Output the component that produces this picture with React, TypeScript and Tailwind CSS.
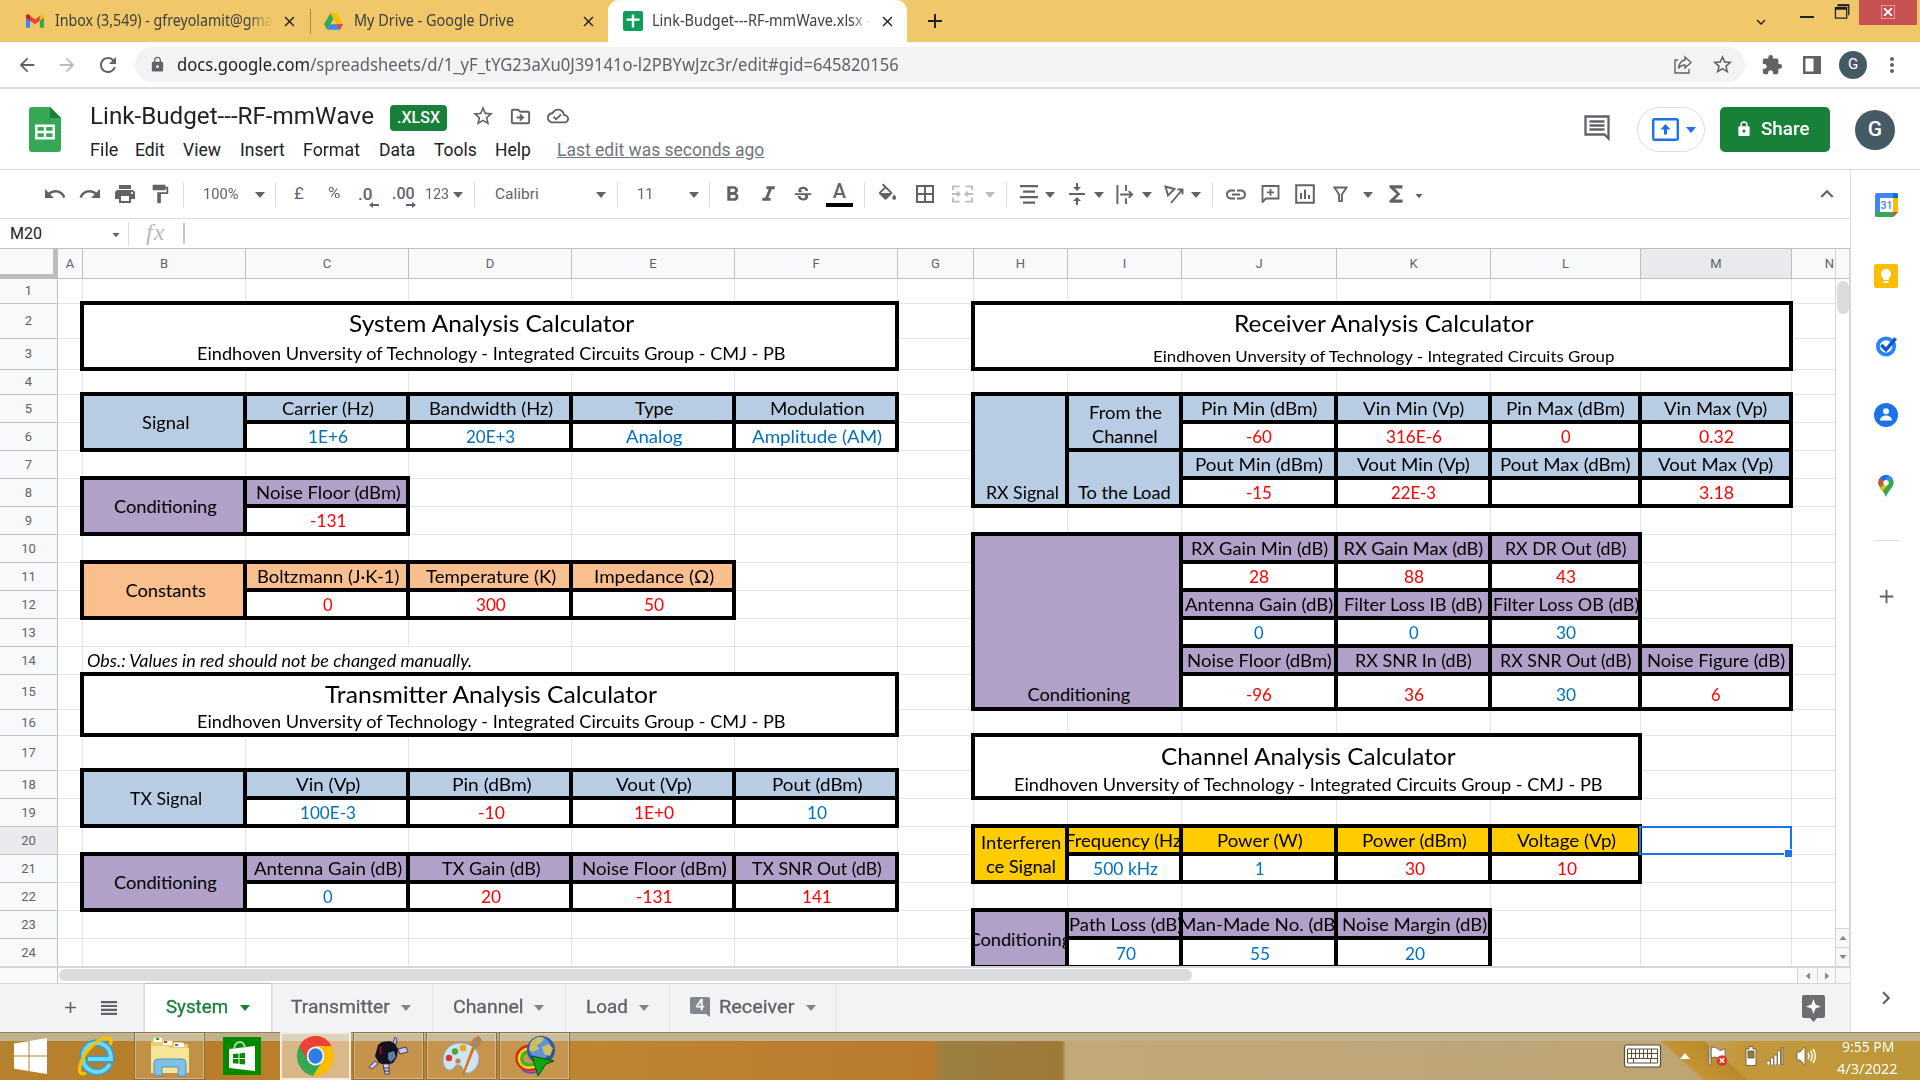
import { useLayoutEffect, useRef, useState } from "react";
import type { ReactNode } from "react";
import {
  MdUndo, MdRedo, MdPrint, MdFormatPaint, MdFormatBold, MdFormatItalic, MdStrikethroughS,
  MdBorderAll, MdVerticalAlignCenter, MdLink, MdFunctions, MdExpandLess, MdExpandMore, MdStarBorder,
  MdOutlineDriveFileMove, MdOutlineCloudDone, MdLock, MdLockOutline, MdArrowBack, MdArrowForward, MdRefresh,
  MdExtension, MdMoreVert, MdClose, MdAdd, MdChevronRight,
} from "react-icons/md";

/* Text squeezed or stretched horizontally to an exact width. */
function Fit({ w, children, className = "" }: { w: number; children: ReactNode; className?: string }) {
  const ref = useRef<HTMLSpanElement>(null);
  const [scale, setScale] = useState(1);
  useLayoutEffect(() => {
    if (ref.current) setScale(w / ref.current.offsetWidth);
  }, [w]);
  return (
    <span className={`inline-flex shrink-0 justify-start whitespace-nowrap ${className}`} style={{ width: w }}>
      <span ref={ref} className="inline-block shrink-0 origin-left whitespace-nowrap" style={{ transform: `scaleX(${scale})` }}>
        {children}
      </span>
    </span>
  );
}

function Caret({ className = "" }: { className?: string }) {
  return (
    <svg viewBox="0 0 10 6" className={`h-[6px] w-[10px] shrink-0 ${className}`} fill="currentColor">
      <path d="M0 0h10L5 6z" />
    </svg>
  );
}

const COLS = [57, 25, 163, 163, 163, 163, 163, 76, 94, 114, 155, 154, 150, 151, 44];
const ROWS = [30, 24, 35, 31, 25, 28, 28, 28, 28, 28, 28, 28, 28, 28, 28, 35, 26, 35, 28, 28, 28, 28, 28, 28, 29];
const LETTERS = "ABCDEFGHIJKLMN";

type Kind = "blue" | "purple" | "orange" | "gold" | "val" | "red";
type Cell = [ref: string, text: string, kind: Kind, width?: number];

const KIND: Record<Kind, string> = {
  blue: "bg-[#b8cce4] text-black",
  purple: "bg-[#b1a0c7] text-black",
  orange: "bg-[#fabf8f] text-black",
  gold: "bg-[#ffcc00] text-black",
  val: "bg-white text-[#0070c0]",
  red: "bg-white text-[#ff0000]",
};

const CELLS: Cell[] = [
  ["C5", "Carrier (Hz)", "blue", 92], ["D5", "Bandwidth (Hz)", "blue", 124.5], ["E5", "Type", "blue", 38], ["F5", "Modulation", "blue", 94.5],
  ["C6", "1E+6", "val", 40], ["D6", "20E+3", "val", 49.5], ["E6", "Analog", "val", 56], ["F6", "Amplitude (AM)", "val", 130],
  ["C8", "Noise Floor (dBm)", "purple", 145], ["C9", "-131", "red", 36],
  ["C11", "Boltzmann (J·K-1)", "orange", 142.5], ["D11", "Temperature (K)", "orange", 130], ["E11", "Impedance (Ω)", "orange", 120],
  ["C12", "0", "red"], ["D12", "300", "red"], ["E12", "50", "red"],
  ["C18", "Vin (Vp)", "blue", 64], ["D18", "Pin (dBm)", "blue", 79], ["E18", "Vout (Vp)", "blue", 75.5], ["F18", "Pout (dBm)", "blue", 91],
  ["C19", "100E-3", "val", 55.5], ["D19", "-10", "red", 27], ["E19", "1E+0", "red", 40], ["F19", "10", "val"],
  ["C21", "Antenna Gain (dB)", "purple", 148.5], ["D21", "TX Gain (dB)", "purple", 99], ["E21", "Noise Floor (dBm)", "purple", 145], ["F21", "TX SNR Out (dB)", "purple", 130],
  ["C22", "0", "val"], ["D22", "20", "red"], ["E22", "-131", "red", 36], ["F22", "141", "red"],
  ["J5", "Pin Min (dBm)", "blue", 116], ["K5", "Vin Min (Vp)", "blue", 101], ["L5", "Pin Max (dBm)", "blue", 119], ["M5", "Vin Max (Vp)", "blue", 103.5],
  ["J6", "-60", "red", 26], ["K6", "316E-6", "red", 55.5], ["L6", "0", "red"], ["M6", "0.32", "red", 35],
  ["J7", "Pout Min (dBm)", "blue", 127.5], ["K7", "Vout Min (Vp)", "blue", 112.5], ["L7", "Pout Max (dBm)", "blue", 130.5], ["M7", "Vout Max (Vp)", "blue", 115.5],
  ["J8", "-15", "red", 26], ["K8", "22E-3", "red", 45], ["L8", "", "red"], ["M8", "3.18", "red", 35],
  ["J10", "RX Gain Min (dB)", "purple", 137], ["K10", "RX Gain Max (dB)", "purple", 140], ["L10", "RX DR Out (dB)", "purple", 121],
  ["J11", "28", "red"], ["K11", "88", "red"], ["L11", "43", "red"],
  ["J12", "Antenna Gain (dB)", "purple", 148.5], ["K12", "Filter Loss IB (dB)", "purple", 138.5], ["L12", "Filter Loss OB (dB)", "purple", 146],
  ["J13", "0", "val"], ["K13", "0", "val"], ["L13", "30", "val"],
  ["J14", "Noise Floor (dBm)", "purple", 145], ["K14", "RX SNR In (dB)", "purple", 116.5], ["L14", "RX SNR Out (dB)", "purple", 131], ["M14", "Noise Figure (dB)", "purple", 138],
  ["J15", "-96", "red", 26], ["K15", "36", "red"], ["L15", "30", "val"], ["M15", "6", "red"],
  ["I20", "Frequency (Hz)", "gold", 121], ["J20", "Power (W)", "gold", 86], ["K20", "Power (dBm)", "gold", 105], ["L20", "Voltage (Vp)", "gold", 98.5],
  ["I21", "500 kHz", "val", 64.5], ["J21", "1", "val"], ["K21", "30", "red"], ["L21", "10", "red"],
  ["I23", "Path Loss (dB)", "purple", 113], ["J23", "Man-Made No. (dB)", "purple", 162], ["K23", "Noise Margin (dB)", "purple", 145],
  ["I24", "70", "val"], ["J24", "55", "val"], ["K24", "20", "val"],
];

type Merge = { a: string; b: string; kind: Kind; lines: [string, number][]; pos: string };
const MID = "justify-center pl-[4px]";
const MERGES: Merge[] = [
  { a: "B5", b: "B6", kind: "blue", lines: [["Signal", 47.5]], pos: MID },
  { a: "B8", b: "B9", kind: "purple", lines: [["Conditioning", 103]], pos: MID },
  { a: "B11", b: "B12", kind: "orange", lines: [["Constants", 80]], pos: MID },
  { a: "B18", b: "B19", kind: "blue", lines: [["TX Signal", 72]], pos: MID },
  { a: "B21", b: "B22", kind: "purple", lines: [["Conditioning", 103]], pos: MID },
  { a: "H5", b: "H8", kind: "blue", lines: [["RX Signal", 73]], pos: "justify-end pl-[4px]" },
  { a: "I5", b: "I6", kind: "blue", lines: [["From the", 73], ["Channel", 66]], pos: "justify-end pl-[2px]" },
  { a: "I7", b: "I8", kind: "blue", lines: [["To the Load", 93]], pos: "justify-end pl-[1px]" },
  { a: "H10", b: "I15", kind: "purple", lines: [["Conditioning", 103]], pos: "justify-end pb-[1px] pl-[4px]" },
  { a: "H20", b: "H21", kind: "gold", lines: [["Interferen", 80], ["ce Signal", 70]], pos: "justify-center pl-[2px]" },
  { a: "H23", b: "H24", kind: "purple", lines: [["Conditioning", 103]], pos: "justify-center" },
];

const TITLES = [
  { a: "B2", b: "F3", t: "System Analysis Calculator", tw: 285, long: true, pad: "pb-[2px] gap-[3px]" },
  { a: "H2", b: "M3", t: "Receiver Analysis Calculator", tw: 300, long: false, pad: "pb-0 gap-[7px]" },
  { a: "B15", b: "F16", t: "Transmitter Analysis Calculator", tw: 332, long: true, pad: "pb-0 gap-0" },
  { a: "H17", b: "L18", t: "Channel Analysis Calculator", tw: 295, long: true, pad: "pb-0 gap-[1px]" },
];

function area(a: string, b: string = a) {
  const p = (s: string) => [Number(s.slice(1)) + 1, LETTERS.indexOf(s[0]) + 2];
  const [r1, c1] = p(a);
  const [r2, c2] = p(b);
  return { gridArea: `${r1} / ${c1} / ${r2 + 1} / ${c2 + 1}` };
}

function Sheet() {
  return (
    <div
      className="relative grid w-[1835px] shrink-0 overflow-hidden bg-white"
      style={{ gridTemplateColumns: COLS.map((c) => `${c}px`).join(" "), gridTemplateRows: ROWS.map((r) => `${r}px`).join(" ") }}
    >
      <div className="border-r-[4px] border-b-[5px] border-[#bdbdbd] bg-[#f8f9fa]" style={{ gridArea: "1 / 1" }} />
      {LETTERS.split("").map((l, i) => (
        <div
          key={l}
          className={`flex items-center justify-center border-b border-l border-[#c0c0c0] text-[13px] text-[#5f6368] ${l === "M" ? "bg-[#e8eaed]" : "bg-[#f8f9fa]"} ${l === "N" ? "pl-[32px]" : ""}`}
          style={{ gridArea: `1 / ${i + 2}` }}
        >
          {l}
        </div>
      ))}
      {ROWS.slice(1).map((_, i) => (
        <div
          key={i}
          className={`flex items-center justify-center text-[13px] text-[#5f6368] ${i === 0 ? "" : "border-t border-[#c0c0c0]"} ${i === 19 ? "bg-[#e8eaed]" : "bg-[#f8f9fa]"}`}
          style={{ gridArea: `${i + 2} / 1` }}
        >
          {i + 1}
        </div>
      ))}
      {ROWS.slice(1).map((_, r) =>
        LETTERS.split("").map((l, c) => (
          <div
            key={l + r}
            className={`border-l ${c === 0 ? "border-l-[#c0c0c0]" : "border-l-[#e2e3e3]"} ${r === 0 ? "" : "border-t border-t-[#e2e3e3]"}`}
            style={{ gridArea: `${r + 2} / ${c + 2}` }}
          />
        )),
      )}
      <div className="mt-px ml-px flex items-end bg-white pl-1 font-['Lato'] text-[16.5px] leading-[26px] italic" style={area("B14", "D14")}>
        <Fit w={385}>Obs.: Values in red should not be changed manually.</Fit>
      </div>
      {TITLES.map((t) => (
        <div
          key={t.a}
          className={`-m-[2px] flex flex-col items-center justify-end border-4 border-black bg-white pl-[3px] font-['Lato'] text-black ${t.pad}`}
          style={area(t.a, t.b)}
        >
          <Fit w={t.tw} className="text-[23.5px] leading-[30px]">{t.t}</Fit>
          {t.long ? (
            <Fit w={589} className="text-[17.8px] leading-[24px]">Eindhoven Unversity of Technology - Integrated Circuits Group - CMJ - PB</Fit>
          ) : (
            <Fit w={461} className="text-[16.2px] leading-[22px]">Eindhoven Unversity of Technology - Integrated Circuits Group</Fit>
          )}
        </div>
      ))}
      {MERGES.map((m) => (
        <div
          key={m.a}
          className={`-m-[2px] flex flex-col items-center overflow-hidden border-4 border-black font-['Lato'] text-[18.2px] leading-[24px] ${m.pos} ${KIND[m.kind]}`}
          style={area(m.a, m.b)}
        >
          {m.lines.map(([t, w]) => (
            <Fit key={t} w={w}>{t}</Fit>
          ))}
        </div>
      ))}
      {CELLS.map(([ref, text, kind, w]) => (
        <div
          key={ref}
          className={`-m-[2px] flex items-end justify-center overflow-hidden border-4 border-black font-['Lato'] text-[18.2px] leading-[24px] ${ref.endsWith("15") ? "pb-[1px]" : ""} ${"CDEFI".includes(ref[0]) || Number(ref.slice(1)) > 19 ? "pl-[3px]" : "pl-px"} ${KIND[kind]}`}
          style={area(ref)}
        >
          {text && <Fit w={w ?? text.length * 10}>{text}</Fit>}
        </div>
      ))}
      <div className="relative -mr-px -mb-px -ml-px border-[2px] border-[#1a73e8]" style={area("M20")}>
        <span className="absolute -right-[3px] -bottom-[5px] h-[9px] w-[9px] border border-white bg-[#1a73e8]" />
      </div>
    </div>
  );
}

function SheetsTabIcon({ className = "" }: { className?: string }) {
  return (
    <svg viewBox="0 0 20 20" className={className}>
      <rect width="20" height="20" rx="2" fill="#0f9d58" />
      <path d="M8.800 3.500h2.400V7.500h5.300v2.300h-5.300v6.700H8.800V9.800H3.500V7.500h5.300z" fill="#fff" />
    </svg>
  );
}

function TabStrip() {
  return (
    <div className="flex h-[42px] shrink-0 items-center bg-[#f0c869] font-['Noto_Sans'] text-[15.5px] text-[#3c4043]">
      <svg viewBox="0 0 24 18" className="ml-[26px] h-[14px] w-[18px]">
        <path d="M0 3v13.500c0 .8.700 1.500 1.500 1.500H5.500V8z" fill="#4285f4" />
        <path d="M24 3v13.500c0 .8-.7 1.500-1.500 1.500H18.500V8z" fill="#34a853" />
        <path d="M5.500 2 12 6.900 18.500 2v6.500L12 13.400 5.500 8.500z" fill="#ea4335" />
        <path d="M18.500 1.500 20.500.3C22 -.6 24 .5 24 2.500V4.600l-5.500 4z" fill="#fbbc04" />
        <path d="M5.500 1.500 3.500.3C2-.6 0 .5 0 2.500v2.100l5.500 4z" fill="#c5221f" />
      </svg>
      <span className="ml-[11px] w-[218px] overflow-hidden [mask-image:linear-gradient(to_right,black_88%,transparent)]">
        <Fit w={218}>Inbox (3,549) - gfreyolamit@gma</Fit>
      </span>
      <MdClose className="ml-[8px] h-[17px] w-[17px] text-[#202124]" />
      <span className="ml-[12px] h-[25px] w-px bg-[#a08a4c]" />
      <svg viewBox="0 0 24 21" className="ml-[13px] h-[17px] w-[19px]">
        <path d="M8 0h8l8 14h-8z" fill="#fbbc04" />
        <path d="M8 0 0 14l4 7 8-14z" fill="#34a853" />
        <path d="M8 14h16l-4 7H4z" fill="#4285f4" />
        <path d="M16 14h8l-4 7z" fill="#ea4335" />
      </svg>
      <Fit w={160} className="ml-[11px]">My Drive - Google Drive</Fit>
      <MdClose className="ml-[66px] h-[17px] w-[17px] text-[#202124]" />
      <div className="ml-[11px] flex h-[42px] w-[299px] items-center rounded-t-[11px] bg-white">
        <SheetsTabIcon className="ml-[15px] h-[20px] w-[20px]" />
        <span className="ml-[9px] w-[220px] overflow-hidden [mask-image:linear-gradient(to_right,black_90%,transparent)]">
          <Fit w={219}>Link-Budget---RF-mmWave.xlsx -</Fit>
        </span>
        <MdClose className="ml-[7px] h-[17px] w-[17px] text-[#202124]" />
      </div>
      <MdAdd className="ml-[16px] h-[24px] w-[24px] text-[#202124]" />
      <MdExpandMore className="mt-px ml-[805px] h-[18px] w-[18px] text-[#202124]" />
      <span className="mb-[8px] ml-[30px] h-[2px] w-[14px] bg-[#202124]" />
      <svg viewBox="0 0 16 16" className="mb-[19px] ml-[20px] h-[15px] w-[16px]" fill="none" stroke="#202124" strokeWidth="1.500">
        <path d="M1 4h12v11H1zM1 5.500h12M4 1h11.200v11" strokeWidth="1.400" />
        <path d="M3 1.500h12" strokeWidth="2" />
      </svg>
      <span className="mb-[17px] ml-[9px] flex h-[25px] w-[58px] items-center justify-center bg-[#c75050] pb-[2px] text-white">
        <MdClose className="h-[14px] w-[14px]" stroke="currentColor" strokeWidth="1.500" />
      </span>
    </div>
  );
}

function AddressBar() {
  return (
    <div className="flex h-[47px] shrink-0 items-center border-b-[2px] border-[#dadce0] bg-white text-[#5f6368]">
      <MdArrowBack className="ml-[16px] h-[22px] w-[22px]" />
      <MdArrowForward className="ml-[18px] h-[22px] w-[22px] text-[#babcbe]" />
      <MdRefresh className="ml-[18px] h-[24px] w-[24px]" />
      <div className="ml-[15px] flex h-[35px] w-[1610px] items-center rounded-full bg-[#f1f3f4]">
        <MdLock className="ml-[14px] h-[17px] w-[17px]" />
        <Fit w={722} className="ml-[11px] font-['Noto_Sans'] text-[17.500px]">
          <span className="text-[#202124]">docs.google.com</span>/spreadsheets/d/1_yF_tYG23aXu0J39141o-l2PBYwJzc3r/edit#gid=645820156
        </Fit>
        <svg viewBox="0 0 20 20" className="ml-[774px] h-[20px] w-[20px]" fill="none" stroke="currentColor" strokeWidth="1.400">
          <path d="M5 5H2v13h14v-4M12 5V2l6 5.500-6 5.500v-3c-3 0-5 1-6.500 3.500C6 9 8 5.500 12 5z" />
        </svg>
        <MdStarBorder className="ml-[18px] h-[23px] w-[23px]" />
      </div>
      <MdExtension className="ml-[16px] h-[22px] w-[22px]" />
      <svg viewBox="0 0 18 18" className="ml-[20px] h-[18px] w-[18px]" fill="currentColor">
        <path d="M0 0h18v18H0zM2.500 2.500v13h8v-13z" fillRule="evenodd" />
      </svg>
      <span className="ml-[18px] flex h-[28px] w-[28px] items-center justify-center rounded-full bg-[#455a64] font-['Roboto'] text-[15px] text-white">G</span>
      <MdMoreVert className="ml-[13px] h-[24px] w-[24px]" />
    </div>
  );
}

function DocHeader() {
  return (
    <div className="flex h-[81px] shrink-0 border-b border-[#dadce0] bg-white text-[#5f6368]">
      <svg viewBox="0 0 32 45" className="mt-[18px] ml-[29px] h-[45px] w-[32px]">
        <path d="M3 0h18l11 11v31a3 3 0 0 1-3 3H3a3 3 0 0 1-3-3V3a3 3 0 0 1 3-3z" fill="#34a853" />
        <path d="M21 0l11 11H21z" fill="#188038" />
        <path d="M6 17.500h20v15H6zM8.500 20v3.700h6.300V20zm8.700 0v3.700h6.300V20zM8.500 26.200V30h6.300v-3.800zm8.700 0V30h6.300v-3.800z" fill="#fff" fillRule="evenodd" />
      </svg>
      <div className="ml-[29px] flex flex-col">
        <div className="mt-[13px] flex h-[28px] items-center">
          <Fit w={284} className="font-['Roboto'] text-[23.500px] leading-[28px] text-[#202124] [font-kerning:none]">Link-Budget---RF-mmWave</Fit>
          <span className="mt-[3px] ml-[16px] flex h-[26px] w-[57px] items-center justify-center rounded-[4px] bg-[#188038] text-white">
            <Fit w={43} className="font-['Roboto'] text-[16px] font-medium">.XLSX</Fit>
          </span>
          <MdStarBorder className="ml-[24px] h-[24px] w-[24px]" />
          <MdOutlineDriveFileMove className="ml-[14px] h-[23px] w-[23px]" />
          <MdOutlineCloudDone className="ml-[15px] h-[22px] w-[22px]" />
        </div>
        <div className="mt-[8px] flex h-[24px] items-center font-['Roboto'] text-[17.500px] text-[#202124]">
          <Fit w={28}>File</Fit>
          <Fit w={30} className="ml-[17px]">Edit</Fit>
          <Fit w={38} className="ml-[18px]">View</Fit>
          <Fit w={45} className="ml-[19px]">Insert</Fit>
          <Fit w={57} className="ml-[18px]">Format</Fit>
          <Fit w={36} className="ml-[19px]">Data</Fit>
          <Fit w={43} className="ml-[19px]">Tools</Fit>
          <Fit w={36} className="ml-[18px]">Help</Fit>
          <Fit w={207} className="ml-[26px] text-[#70757a] underline">Last edit was seconds ago</Fit>
        </div>
      </div>
      <div className="mt-[18px] ml-auto flex h-[45px] items-center">
        <svg viewBox="0 0 26 26" className="mb-[3px] h-[26px] w-[26px]" fill="none" stroke="currentColor" strokeWidth="2.300">
          <path d="M1.500 1.500h23v22l-4-4H1.500z" />
          <path d="M5.500 6.500h15M5.500 10.500h15M5.500 14.500h15" />
        </svg>
        <div className="ml-[27px] flex h-[45px] w-[68px] items-center rounded-full border border-[#dadce0] text-[#1a73e8]">
          <svg viewBox="0 0 27 23" className="ml-[14px] h-[23px] w-[27px]">
            <rect x="1.200" y="1.200" width="24.600" height="20.600" rx="1.500" fill="none" stroke="currentColor" strokeWidth="2.400" />
            <path d="M13.500 6l5 5.500h-3.500v5h-3v-5H8.500z" fill="currentColor" />
          </svg>
          <Caret className="ml-[7px]" />
        </div>
        <div className="ml-[15px] flex h-[45px] w-[110px] items-center rounded-[5px] bg-[#188038] pb-[2px] text-white">
          <svg viewBox="0 0 12 16" className="ml-[18px] h-[15px] w-[12px]">
            <path d="M3 6V4a3 3 0 0 1 6 0v2" fill="none" stroke="#fff" strokeWidth="1.600" />
            <path d="M1 5.500h10a1 1 0 0 1 1 1V15a1 1 0 0 1-1 1H1a1 1 0 0 1-1-1V6.500a1 1 0 0 1 1-1zM6 9a1.700 1.700 0 1 0 0 3.400A1.700 1.700 0 0 0 6 9z" fill="#fff" />
          </svg>
          <Fit w={48} className="ml-[11px] font-['Roboto'] text-[18px] font-medium">Share</Fit>
        </div>
        <span className="mr-[25px] ml-[25px] flex h-[40px] w-[40px] items-center justify-center rounded-full bg-[#455a64] font-['Roboto'] text-[21px] font-medium text-white">G</span>
      </div>
    </div>
  );
}

function Sep({ className }: { className: string }) {
  return <span className={`h-[25px] w-px shrink-0 bg-[#dadce0] ${className}`} />;
}

function Toolbar() {
  return (
    <div className="flex h-[49px] shrink-0 items-center border-b border-[#dadce0] font-['Roboto'] text-[15.500px] text-[#5f6368]">
      <MdUndo className="ml-[43px] h-[24px] w-[24px]" />
      <MdRedo className="ml-[11px] h-[24px] w-[24px]" />
      <MdPrint className="ml-[11px] h-[24px] w-[24px]" />
      <MdFormatPaint className="ml-[11px] h-[22px] w-[24px]" />
      <Sep className="ml-[11px]" />
      <Fit w={36} className="mt-px ml-[19px]">100%</Fit>
      <Caret className="mt-[2px] ml-[16px]" />
      <Sep className="ml-[10px]" />
      <Fit w={10} className="ml-[18px] text-[17px]">£</Fit>
      <Fit w={12} className="ml-[24px]">%</Fit>
      <span className="mt-[4px] ml-[18px] flex w-[20px] flex-col">
        <span className="h-[18px] text-[17px] leading-[18px] font-medium">.0</span>
        <svg viewBox="0 0 10 6" className="-mt-px -mr-px ml-auto h-[6px] w-[10px] shrink-0" fill="currentColor"><path d="M0 3l4-3v2h6v2H4v2z" /></svg>
      </span>
      <span className="mt-[4px] ml-[14px] flex w-[23px] flex-col">
        <span className="h-[18px] text-[16px] leading-[18px] font-medium">.00</span>
        <svg viewBox="0 0 10 6" className="-mt-px -mr-px ml-auto h-[6px] w-[10px] shrink-0" fill="currentColor"><path d="M10 3L6 0v2H0v2h6v2z" /></svg>
      </span>
      <Fit w={24} className="mt-px ml-[10px]">123</Fit>
      <Caret className="mt-[2px] ml-[4px]" />
      <Sep className="ml-[11px]" />
      <Fit w={44} className="mt-px ml-[20px]">Calibri</Fit>
      <Caret className="mt-[2px] ml-[57px]" />
      <Sep className="ml-[11px]" />
      <Fit w={16} className="mt-px ml-[19px]">11</Fit>
      <Caret className="mt-[2px] ml-[36px]" />
      <Sep className="ml-[10px]" />
      <MdFormatBold className="mt-px ml-[10px] h-[25px] w-[25px]" />
      <MdFormatItalic className="mt-px ml-[11px] h-[25px] w-[25px]" />
      <MdStrikethroughS className="mt-px ml-[11px] h-[22px] w-[22px]" />
      <span className="ml-[12px] flex h-[26px] w-[27px] flex-col items-center">
        <span className="text-[20px] leading-[21px] font-medium">A</span>
        <span className="mt-px h-[4px] w-[27px] shrink-0 bg-black" />
      </span>
      <Sep className="ml-[11px]" />
      <svg viewBox="0 0 24 24" className="mt-[2px] ml-[11px] h-[24px] w-[23px]" fill="currentColor">
        <path d="M16.560 8.940 7.620 0 6.210 1.410l2.380 2.380-5.150 5.150a1.490 1.490 0 0 0 0 2.120l5.500 5.500c.29.29.68.44 1.060.44s.77-.15 1.060-.44l5.500-5.500c.59-.58.59-1.530 0-2.120zM5.210 10 10 5.210 14.790 10zM19 11.500s-2 2.170-2 3.500c0 1.100.9 2 2 2s2-.9 2-2c0-1.330-2-3.500-2-3.500z" />
      </svg>
      <MdBorderAll className="ml-[14px] h-[24px] w-[24px]" />
      <svg viewBox="0 0 22 18" className="ml-[15px] h-[18px] w-[21px]" fill="none" stroke="#babcbe" strokeWidth="2">
        <path d="M1 5V1h7M14 1h7v4M1 13v4h7M14 17h7v-4M0 9h8M22 9h-8M5.500 6.500 8 9l-2.500 2.500M16.500 6.500 14 9l2.500 2.500" />
      </svg>
      <Caret className="mt-[2px] ml-[12px] text-[#babcbe]" />
      <Sep className="ml-[11px]" />
      <svg viewBox="0 0 18 19" className="ml-[13px] h-[19px] w-[18px]" stroke="currentColor" strokeWidth="2.200">
        <path d="M0 1.200h18M3 6.700h12M0 12.200h18M3 17.700h12" />
      </svg>
      <Caret className="mt-[2px] ml-[7px]" />
      <MdVerticalAlignCenter className="ml-[10px] h-[26px] w-[24px]" />
      <Caret className="mt-[2px] ml-[5px]" />
      <svg viewBox="0 0 18 20" className="ml-[12px] h-[19px] w-[18px]" fill="none" stroke="currentColor" strokeWidth="2">
        <path d="M1 0v20M10 0v6M10 14v6M4 10h12M13 6.500l3.500 3.500-3.500 3.500" />
      </svg>
      <Caret className="mt-[2px] ml-[8px]" />
      <svg viewBox="0 0 20 20" className="ml-[12px] h-[20px] w-[20px]" fill="none" stroke="currentColor" strokeWidth="1.900">
        <path d="M1.500 2.500 10.500 5 4 11.500zM7 19 18 6M13.500 5.500H18.500v5" />
      </svg>
      <Caret className="mt-[2px] ml-[7px]" />
      <Sep className="ml-[11px]" />
      <MdLink className="ml-[11px] h-[25px] w-[24px]" />
      <svg viewBox="0 0 18 18" className="ml-[13px] h-[18px] w-[19px]" fill="none" stroke="currentColor" strokeWidth="1.800">
        <path d="M1 17V1h16v12.500H4.500zM9 3.800v7M5.500 7.300h7" />
      </svg>
      <svg viewBox="0 0 20 20" className="ml-[15px] h-[20px] w-[20px]" fill="none" stroke="currentColor" strokeWidth="2">
        <path d="M1.200 1.200h17.600v17.600H1.200zM6 9v6M10 5.500V15M14 11v4" />
      </svg>
      <svg viewBox="0 0 16 18" className="ml-[18px] h-[17px] w-[15px]" fill="none" stroke="currentColor" strokeWidth="2">
        <path d="M1.500 1.500h13L9.500 9v7h-3V9z" />
      </svg>
      <Caret className="mt-[2px] ml-[15px]" />
      <MdFunctions className="ml-[10px] h-[26px] w-[26px]" />
      <Caret className="mt-[4px] ml-[5px] scale-75" />
      <MdExpandLess className="mr-[10px] ml-auto h-[26px] w-[26px]" />
    </div>
  );
}

function FormulaBar() {
  return (
    <div className="flex h-[30px] shrink-0 items-center border-b border-[#c0c0c0] text-[#202124]">
      <Fit w={32} className="ml-[10px] font-['Roboto'] text-[16px]">M20</Fit>
      <Caret className="mt-[2px] ml-[69px] scale-75 text-[#5f6368]" />
      <span className="ml-[7px] h-[24px] w-px bg-[#dadce0]" />
      <span className="mb-[3px] ml-[17px] w-[22px] font-['Liberation_Serif'] text-[24px] leading-[26px] tracking-[1px] text-[#b8b8b8] italic">fx</span>
      <span className="ml-[15px] h-[21px] w-[2px] bg-[#c4c4c4]" />
    </div>
  );
}

function Scrollbars() {
  return (
    <div className="flex h-[17px] w-[1850px] shrink-0 border-t border-b border-[#d5d5d5] bg-white">
      <span className="w-[58px] shrink-0 border-r border-[#c0c0c0] bg-[#f8f9fa]" />
      <span className="mt-px ml-px h-[12px] w-[1133px] rounded-full bg-[#dadce0]" />
      <span className="ml-auto flex w-[20px] items-center justify-center border-l border-[#d5d5d5] bg-[#f8f8f8]">
        <Caret className="scale-75 rotate-90 text-[#8a8a8a]" />
      </span>
      <span className="flex w-[18px] items-center justify-center border-l border-[#d5d5d5] bg-[#f8f8f8]">
        <Caret className="scale-75 -rotate-90 text-[#8a8a8a]" />
      </span>
      <span className="w-[15px] border-l border-[#d5d5d5] bg-[#f8f8f8]" />
    </div>
  );
}

function SheetTabs() {
  return (
    <div className="flex h-[49px] w-[1850px] shrink-0 items-center bg-[#f1f3f4] font-['Roboto'] text-[17.500px] text-[#5f6368] [-webkit-text-stroke:0.3px]">
      <MdAdd className="mb-[3px] ml-[61px] h-[19px] w-[19px]" />
      <svg viewBox="0 0 16 14" className="mb-px ml-[21px] h-[14px] w-[16px]" stroke="currentColor" strokeWidth="2.200">
        <path d="M0 1.200h16M0 5h16M0 8.900h16M0 12.800h16" />
      </svg>
      <div className="ml-[28px] flex h-[49px] w-[126px] items-center bg-white pb-[2px] text-[#188038] shadow-[0_0_3px_rgba(60,64,67,0.35)]">
        <Fit w={62} className="ml-[21px]">System</Fit>
        <Caret className="ml-[12px]" />
      </div>
      <Fit w={99} className="mb-[2px] ml-[20px]">Transmitter</Fit>
      <Caret className="mb-[2px] ml-[11px] text-[#80868b]" />
      <span className="ml-[21px] h-[49px] w-px bg-[#e3e5e8]" />
      <Fit w={70} className="mb-[2px] ml-[20px]">Channel</Fit>
      <Caret className="mb-[2px] ml-[11px] text-[#80868b]" />
      <span className="ml-[21px] h-[49px] w-px bg-[#e3e5e8]" />
      <Fit w={42} className="mb-[2px] ml-[20px]">Load</Fit>
      <Caret className="mb-[2px] ml-[11px] text-[#80868b]" />
      <span className="ml-[20px] h-[49px] w-px bg-[#e3e5e8]" />
      <span className="mb-[3px] ml-[20px] flex h-[20px] w-[20px] flex-col items-end">
        <span className="flex h-[17px] w-[20px] items-center justify-center rounded-t-[2px] rounded-bl-[2px] bg-[#80868b] text-[15px] text-white">4</span>
        <svg viewBox="0 0 4 3" className="h-[3px] w-[4px]" fill="#80868b"><path d="M0 0h4v3z" /></svg>
      </span>
      <Fit w={75} className="mb-[2px] ml-[9px]">Receiver</Fit>
      <Caret className="mb-[2px] ml-[12px] text-[#80868b]" />
      <span className="ml-[20px] h-[49px] w-px bg-[#e3e5e8]" />
      <svg viewBox="0 0 23 27" className="mr-[25px] ml-auto h-[27px] w-[23px]">
        <path d="M2 0h19a2 2 0 0 1 2 2v19a2 2 0 0 1-2 2h-6l-3.500 4L8 23H2a2 2 0 0 1-2-2V2a2 2 0 0 1 2-2z" fill="#6b6d70" />
        <path d="M11.500 4l2 5.500 5.500 2-5.500 2-2 5.500-2-5.500-5.500-2 5.500-2z" fill="#fff" />
      </svg>
    </div>
  );
}

function SidePanel() {
  return (
    <div className="flex w-[70px] shrink-0 flex-col items-center border-l border-[#dadce0] bg-white pl-px text-[#5f6368]">
      <svg viewBox="0 0 23 24" className="mt-[23px] h-[24px] w-[23px]">
        <rect width="23" height="24" rx="2" fill="#4285f4" />
        <path d="M18 0h3a2 2 0 0 1 2 2v3h-5z" fill="#1967d2" />
        <path d="M18 5h5v14h-5z" fill="#fbbc04" />
        <path d="M0 19h18v5H2a2 2 0 0 1-2-2z" fill="#34a853" />
        <path d="M23 19.200V24h-5z" fill="#fff" />
        <path d="M18 19h5l-5 5z" fill="#ea4335" />
        <path d="M5 5h13v14H5z" fill="#fff" />
        <text x="11.500" y="16" textAnchor="middle" fontFamily="Roboto" fontSize="10.500" fontWeight="500" fill="#4285f4">31</text>
      </svg>
      <svg viewBox="0 0 24 24" className="mt-[47px] h-[24px] w-[24px]">
        <rect width="24" height="24" rx="2.500" fill="#fbbc04" />
        <path d="M12 5a5 5 0 0 0-2.700 9.200V16h5.400v-1.800A5 5 0 0 0 12 5zM9.500 17.300h5v1.700h-5z" fill="#fff" />
      </svg>
      <svg viewBox="0 0 24 24" className="mt-[46px] h-[23px] w-[23px]" fill="none">
        <circle cx="11.500" cy="13" r="8.500" stroke="#2684fc" strokeWidth="4" />
        <path d="M6.500 11.500 11.500 16.500 21.500 4.500" stroke="#0b57d0" strokeWidth="3.600" />
      </svg>
      <svg viewBox="0 0 24 24" className="mt-[46px] h-[24px] w-[24px]">
        <circle cx="12" cy="12" r="12" fill="#1a73e8" />
        <circle cx="12" cy="8.300" r="3" fill="#fff" />
        <path d="M6 17.500c0-3.500 3-5 6-5s6 1.500 6 5z" fill="#fff" />
      </svg>
      <svg viewBox="0 0 16 23" className="mt-[48px] h-[22px] w-[16px]">
        <path d="M8 0a8 8 0 0 1 8 8c0 5-5 7-8 15-3-8-8-10-8-15a8 8 0 0 1 8-8z" fill="#34a853" />
        <path d="M1.800 3A8 8 0 0 1 11 .6L5.500 7z" fill="#1a73e8" />
        <path d="M1.800 3 5.500 6.200 1 12Q-1.500 7 1.800 3z" fill="#ea4335" />
        <path d="M5.500 10.500 1.500 13.500 4 17 11 9.500z" fill="#fbbc04" />
        <path d="M11 .6A8 8 0 0 1 15 4L10.500 6 6.500 5.500z" fill="#4285f4" />
        <circle cx="8" cy="8" r="2.800" fill="#fff" />
      </svg>
      <span className="mt-[43px] h-px w-[25px] bg-[#dadce0]" />
      <MdAdd className="mt-[44px] h-[23px] w-[23px]" />
      <MdChevronRight className="mt-auto mb-[21px] h-[26px] w-[26px]" />
    </div>
  );
}

function TaskButton({ children, className = "" }: { children: ReactNode; className?: string }) {
  return <div className={`flex h-[48px] w-[71px] shrink-0 items-center justify-center border ${className}`}>{children}</div>;
}

const IDLE = "border-[#8d6f3c] bg-white/15 shadow-[inset_0_0_0_1px_rgba(255,255,255,0.3)]";

function Taskbar() {
  return (
    <div className="h-[48px] shrink-0 bg-[linear-gradient(222deg,transparent_0,transparent_calc(0%+150px),#b98a2c_152px,#c49230_178px,transparent_182px),linear-gradient(to_right,#b58230,#b77d28_160px,#be8430_600px,#b97a2e_930px,#9a8040_945px,#9e7c3c_1000px,#9e7a38_1062px,#c2a97a_1066px,#bda678_1500px,#bfa574_1690px,#c3983a_1740px,#bd9838)]">
      <div className="flex h-[48px] items-center bg-[linear-gradient(#8f8362_0,#8f8362_1px,#c0b18b_1px,#c0b18b_9px,transparent_9px)]">
        <svg viewBox="0 0 33 36" className="ml-[14px] h-[36px] w-[33px]" fill="#fff">
          <path d="M0 5.500 14.500 3.200V17.500H0zM15.500 3 33 0V17.500H15.500zM0 18.500h14.500V33L0 30.800zM15.500 18.500H33V36L15.500 33.200z" />
        </svg>
        <svg viewBox="0 0 38 40" className="ml-[30px] h-[40px] w-[38px]" fill="none">
          <path d="M33 28c-3 5-7 8-13 8C12 36 6 30 6 21.500S12 7 20 7s14 6 14 16H11" stroke="#2a9fd8" strokeWidth="7" />
          <path d="M33 28c-3 5-7 8-13 8C12 36 6 30 6 21.500S12 7 20 7s14 6 14 16H11" stroke="#6fd8fa" strokeWidth="4" />
          <path d="M33 9C38-1 24 0 13 12S-2 42 9 37" stroke="#f2c200" strokeWidth="3.400" />
        </svg>
        <TaskButton className={`ml-[19px] ${IDLE}`}>
          <svg viewBox="0 0 40 42" className="h-[42px] w-[40px]">
            <path d="M3 2h9l1 3h9l1 2h9l2 2h4v28H1V8z" fill="#e9cf6b" />
            <path d="M4 3h8v4H4zM13 6h9v4h-9zM24 8h10v4H24z" fill="#fff" />
            <path d="M6 3h3v2H6z" fill="#2e9e45" />
            <path d="M14 6h3v2h-3z" fill="#d33" />
            <path d="M25 9h3v2h-3z" fill="#2a7fd0" />
            <path d="M1 11h16l3 2h19v25H1z" fill="#f6e596" />
            <path d="M4 40V28q0-4 4-4h24q4 0 4 4v13h-8v-9H12v9z" fill="#7fc0e4" stroke="#4e94bf" />
          </svg>
        </TaskButton>
        <svg viewBox="0 0 38 38" className="ml-[18px] h-[38px] w-[38px]">
          <path fill="#008a00" d="M0 0h38v38H0z" />
          <path d="M6 12 32 9v25L6 31z" fill="#fff" />
          <path d="M11 12q1-7 6-7 4 0 5 6" fill="none" stroke="#a6d8a6" strokeWidth="2" />
          <path d="M10 17l5.500-.5V21H10zM16.500 16.400l5.500-.6V21h-5.500zM10 22h5.500v4.800L10 26.300zM16.500 22H22v5.500l-5.500-.6z" fill="#008a00" />
        </svg>
        <TaskButton className="ml-[19px] border-2 border-[#f4ecdc] bg-white/45">
          <svg viewBox="0 0 38 38" preserveAspectRatio="none" className="h-[40px] w-[37px]">
            <circle cx="19" cy="19" r="19" fill="#fbbc04" />
            <path d="M19 19 2.500 9.500A19 19 0 0 0 16.500 37.800L26 24z" fill="#34a853" />
            <path d="M2.500 9.500A19 19 0 0 1 35.500 9.500H19v9.500l-8 4.500z" fill="#ea4335" />
            <circle cx="19" cy="19" r="9" fill="#fff" />
            <circle cx="19" cy="19" r="7.300" fill="#2f7de9" />
          </svg>
        </TaskButton>
        <TaskButton className={`ml-[2px] ${IDLE}`}>
          <svg viewBox="0 0 40 38" className="h-[38px] w-[40px]">
            <path d="M24 6 26 0l2 2-1 6zM6 24 0 30l3 2 6-5zM29 12l8-2 2 5-8 2z" fill="#c9c4e8" stroke="#2a2455" strokeWidth=".8" />
            <path d="M9 8l4-3 8-1 5 3 3 5-1 8-4 6-7 2-7-2-4-7z" fill="#15101f" />
            <path d="M19 16l6-2 2 6-5 5-3-3z" fill="#5c7da8" />
            <path d="M10 10l3-1v8l-3 1z" fill="#5a1520" />
            <path d="M14 27h6v10h-4z" fill="#d9d6f2" stroke="#2a2455" strokeWidth=".8" />
            <path d="M14 31h6M15 34h5" stroke="#2a2455" />
          </svg>
        </TaskButton>
        <TaskButton className={`ml-[2px] ${IDLE}`}>
          <svg viewBox="0 0 40 40" className="h-[40px] w-[40px]">
            <path d="M20 7C9 6 1 14 1 24c0 7 4 11 8 10s3-6 8-5 3 8 8 8c7 0 12-8 12-15S31 8 20 7z" fill="#cfe3f2" stroke="#86a9c4" />
            <circle cx="16" cy="25" r="2.600" fill="#b98a4a" />
            <circle cx="7" cy="22" r="3.200" fill="#d8392f" />
            <circle cx="13" cy="15.500" r="3.200" fill="#46a845" />
            <circle cx="21" cy="12" r="3.400" fill="#f2a50c" />
            <path d="M33 12 22 39l-2-.5L30 11z" fill="#d9721c" />
            <path d="M28 9q2-8 9-9l3 4q-1 6-7 8z" fill="#b28557" />
          </svg>
        </TaskButton>
        <TaskButton className={`ml-[2px] ${IDLE}`}>
          <svg viewBox="0 0 40 40" className="h-[40px] w-[40px]">
            <g fill="none" strokeWidth="3">
              <path d="M14 10C-1 11-3 31 13 34l8-1" stroke="#d8291c" />
              <path d="M14 12.500C2 14 0 29 13 31.500l8-1" stroke="#f2d70c" />
              <path d="M14 15C5 17 4 27 13 29l8-1" stroke="#36b52a" />
              <path d="M7 34q6 4 14 2" stroke="#5a52c8" strokeWidth="2" />
            </g>
            <circle cx="26" cy="14" r="14" fill="#2c56a0" />
            <circle cx="25" cy="12" r="11" fill="#5d92dd" />
            <path d="M16 6q6-7 13-4l-2 4-5 3 2 4-6 3-4-2zM27 11l6-3 5 4-3 8-6-2z" fill="#cfbd62" />
            <path d="M17 20 39 25l-8 3-8 12z" fill="#12a312" stroke="#064d06" />
          </svg>
        </TaskButton>
        <svg viewBox="0 0 38 24" className="ml-auto h-[24px] w-[39px]">
          <rect x="1" y="1" width="36" height="22" rx="2" fill="#fff" stroke="#5b4f33" strokeWidth="1.200" />
          <path d="M4 5h30v14H4zM4 9.500h30M4 14.500h30M8 5v9.500M12 5v9.500M16 5v9.500M20 5v9.500M24 5v9.500M28 5v9.500M10 14.500V19M27 14.500V19" fill="none" stroke="#5b4f33" />
        </svg>
        <Caret className="ml-[18px] rotate-180 text-white" />
        <svg viewBox="0 0 20 20" className="ml-[18px] h-[20px] w-[20px]">
          <path d="M1 0h2v19H1zM3 2q4-2 7 1t7-.5V12q-4 2-7 0t-7 0z" fill="#fff" stroke="#5b4f33" strokeWidth=".7" />
          <circle cx="14" cy="14.500" r="5.300" fill="#d8352c" />
          <path d="M11.800 12.300l4.400 4.400m0-4.400-4.400 4.400" stroke="#fff" strokeWidth="1.600" />
        </svg>
        <svg viewBox="0 0 12 20" className="ml-[17px] h-[20px] w-[12px]" fill="#fff" stroke="#5b4f33" strokeWidth=".8">
          <path d="M4 .5h4v2.500h3v16.500H1V3h3z" />
          <path d="M3 5h6v7H3z" fill="#9a7a35" />
        </svg>
        <svg viewBox="0 0 17 18" className="ml-[10px] h-[18px] w-[17px]" fill="#fff" stroke="#5b4f33" strokeWidth=".6">
          <path d="M0 14h3v4H0zM3.500 11h3v7h-3zM7 8h3v10H7zM10.500 4h3v14h-3z" />
          <path d="M14 0h3v18h-3z" fill="#b9a36a" />
        </svg>
        <svg viewBox="0 0 20 20" className="ml-[12px] h-[20px] w-[20px]" fill="none" stroke="#fff" strokeWidth="1.400">
          <path d="M1 6h3l5-5.500v19L4 14H1z" fill="#fff" stroke="#5b4f33" strokeWidth=".7" />
          <path d="M12 7q2 3 0 6M14.500 5q3.500 5 0 10M17 3q4.500 7 0 14" />
        </svg>
        <div className="mr-[22px] ml-[21px] flex w-[61px] flex-col items-center pt-px font-['Noto_Sans'] text-[15px] leading-[22px] text-white">
          <Fit w={52}>9:55 PM</Fit>
          <Fit w={61}>4/3/2022</Fit>
        </div>
      </div>
    </div>
  );
}

export default function App() {
  return (
    <div className="flex h-[1080px] w-[1920px] flex-col overflow-hidden bg-white font-['Roboto',sans-serif]">
      <TabStrip />
      <AddressBar />
      <DocHeader />
      <div className="flex h-[862px] shrink-0">
        <div className="flex w-[1850px] flex-col">
          <Toolbar />
          <FormulaBar />
          <div className="flex h-[718px] shrink-0 border-b border-[#d5d5d5]">
            <Sheet />
            <div className="flex w-[15px] flex-col items-center border-r border-l border-[#d5d5d5]">
              <span className="h-[30px] w-full shrink-0 border-b border-[#c0c0c0] bg-[#f8f9fa]" />
              <span className="mt-[2px] h-[33px] w-[12px] shrink-0 rounded-full bg-[#dadce0]" />
              <span className="mt-auto flex h-[19px] w-full items-center justify-center border-t border-[#d5d5d5] bg-[#f8f8f8]">
                <Caret className="scale-75 rotate-180 text-[#8a8a8a]" />
              </span>
              <span className="flex h-[19px] w-full items-center justify-center border-t border-[#d5d5d5] bg-[#f8f8f8]">
                <Caret className="scale-75 text-[#8a8a8a]" />
              </span>
            </div>
          </div>
          <Scrollbars />
          <SheetTabs />
        </div>
        <SidePanel />
      </div>
      <Taskbar />
    </div>
  );
}
